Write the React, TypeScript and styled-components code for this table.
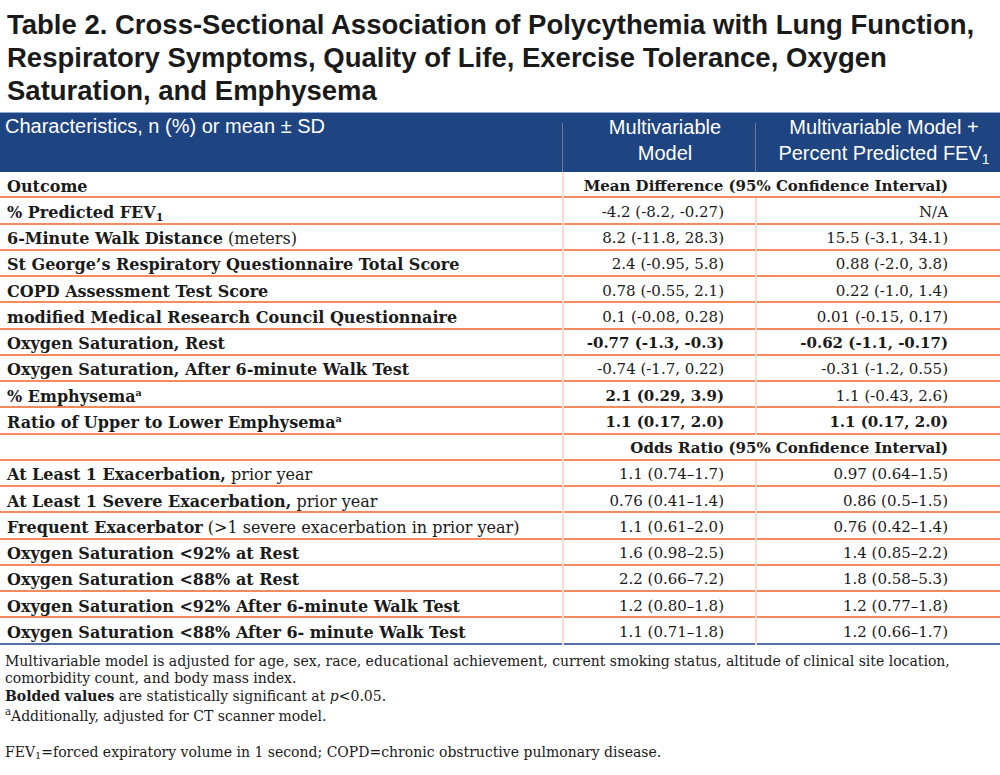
import React from "react";
import styled, { createGlobalStyle } from "styled-components";

const GlobalStyle = createGlobalStyle`
  html, body { margin: 0; padding: 0; background: #ffffff; }
  body { font-family: "DejaVu Serif", serif; color: #1a1a1a; }
`;

const Page = styled.div`
  width: 1000px;
  display: flex;
  flex-direction: column;
`;

const Title = styled.h1`
  margin: 0;
  padding: 8px 0 0 7px;
  font-family: "Liberation Sans", Arial, sans-serif;
  font-weight: bold;
  font-size: 27.5px;
  line-height: 33px;
  color: #1a1a1a;
  height: 112px;
  box-sizing: border-box;
`;

const HeaderBar = styled.div`
  display: grid;
  grid-template-columns: 562px 193px 1fr;
  background: #1e4582;
  border-top: 1px solid #8fa8d0;
  height: 60px;
  box-sizing: border-box;
  color: #ffffff;
  font-family: "Liberation Sans", Arial, sans-serif;
  font-size: 20px;
  line-height: 26px;
`;

const HeadCell = styled.div<{ $center?: boolean; $divider?: boolean }>`
  position: relative;
  padding: ${(p) => (p.$center ? "1px 0 0 13px" : "0 0 0 5px")};
  text-align: ${(p) => (p.$center ? "center" : "left")};
  &::before {
    content: "";
    display: ${(p) => (p.$divider ? "block" : "none")};
    position: absolute;
    left: 0;
    top: 10px;
    bottom: 0;
    width: 1px;
    background: #6f7a9a;
  }
`;

const Body = styled.div`
  display: flex;
  flex-direction: column;
`;

const Row = styled.div<{ $last?: boolean }>`
  display: grid;
  grid-template-columns: 562px 193px 1fr;
  height: 26.25px;
  box-sizing: border-box;
  border-bottom: 2px solid ${(p) => (p.$last ? "#5470a8" : "#f58a5c")};
  font-size: 15px;
  line-height: 25px;
`;

const Label = styled.div`
  padding: 1.5px 0 0 7px;
  white-space: nowrap;
  font-size: 16px;
  line-height: 25px;
`;

const Strong = styled.span`
  font-weight: bold;
`;

const Value = styled.div<{ $bold?: boolean; $pad: number }>`
  border-left: 2px solid #fcdccf;
  text-align: right;
  padding-top: 1.5px;
  padding-right: ${(p) => p.$pad}px;
  font-weight: ${(p) => (p.$bold ? "bold" : "normal")};
  white-space: nowrap;
`;

const SpanValue = styled(Value)`
  grid-column: 2 / 4;
  font-weight: bold;
`;

const Sub = styled.sub`
  font-size: 0.7em;
  vertical-align: -0.25em;
  line-height: 0;
`;

const Sup = styled.sup`
  font-size: 0.6em;
  vertical-align: 0.6em;
  line-height: 0;
`;

const NoteSup = styled(Sup)`
  font-size: 0.72em;
`;

const Notes = styled.div`
  padding: 8px 0 0 5px;
  font-size: 14px;
  line-height: 17.5px;
  color: #1a1a1a;
`;

const NoteLine = styled.p<{ $gap?: number }>`
  margin: ${(p) => p.$gap ?? 0}px 0 0 0;
`;

type DataRow = {
  label: React.ReactNode;
  a: string;
  b: string;
  boldA?: boolean;
  boldB?: boolean;
};

const meanRows: DataRow[] = [
  { label: <Strong>% Predicted FEV<Sub>1</Sub></Strong>, a: "-4.2 (-8.2, -0.27)", b: "N/A" },
  { label: <><Strong>6-Minute Walk Distance</Strong> (meters)</>, a: "8.2 (-11.8, 28.3)", b: "15.5 (-3.1, 34.1)" },
  { label: <Strong>St George’s Respiratory Questionnaire Total Score</Strong>, a: "2.4 (-0.95, 5.8)", b: "0.88 (-2.0, 3.8)" },
  { label: <Strong>COPD Assessment Test Score</Strong>, a: "0.78 (-0.55, 2.1)", b: "0.22 (-1.0, 1.4)" },
  { label: <Strong>modified Medical Research Council Questionnaire</Strong>, a: "0.1 (-0.08, 0.28)", b: "0.01 (-0.15, 0.17)" },
  { label: <Strong>Oxygen Saturation, Rest</Strong>, a: "-0.77 (-1.3, -0.3)", b: "-0.62 (-1.1, -0.17)", boldA: true, boldB: true },
  { label: <Strong>Oxygen Saturation, After 6-minute Walk Test</Strong>, a: "-0.74 (-1.7, 0.22)", b: "-0.31 (-1.2, 0.55)" },
  { label: <Strong>% Emphysema<Sup>a</Sup></Strong>, a: "2.1 (0.29, 3.9)", b: "1.1 (-0.43, 2.6)", boldA: true },
  { label: <Strong>Ratio of Upper to Lower Emphysema<Sup>a</Sup></Strong>, a: "1.1 (0.17, 2.0)", b: "1.1 (0.17, 2.0)", boldA: true, boldB: true },
];

const oddsRows: DataRow[] = [
  { label: <><Strong>At Least 1 Exacerbation,</Strong> prior year</>, a: "1.1 (0.74–1.7)", b: "0.97 (0.64–1.5)" },
  { label: <><Strong>At Least 1 Severe Exacerbation,</Strong> prior year</>, a: "0.76 (0.41–1.4)", b: "0.86 (0.5–1.5)" },
  { label: <><Strong>Frequent Exacerbator</Strong> (&gt;1 severe exacerbation in prior year)</>, a: "1.1 (0.61–2.0)", b: "0.76 (0.42–1.4)" },
  { label: <Strong>Oxygen Saturation &lt;92% at Rest</Strong>, a: "1.6 (0.98–2.5)", b: "1.4 (0.85–2.2)" },
  { label: <Strong>Oxygen Saturation &lt;88% at Rest</Strong>, a: "2.2 (0.66–7.2)", b: "1.8 (0.58–5.3)" },
  { label: <Strong>Oxygen Saturation &lt;92% After 6-minute Walk Test</Strong>, a: "1.2 (0.80–1.8)", b: "1.2 (0.77–1.8)" },
  { label: <Strong>Oxygen Saturation &lt;88% After 6- minute Walk Test</Strong>, a: "1.1 (0.71–1.8)", b: "1.2 (0.66–1.7)" },
];

const DataLine: React.FC<{ row: DataRow; last?: boolean }> = ({ row, last }) => (
  <Row $last={last}>
    <Label>{row.label}</Label>
    <Value $pad={31} $bold={row.boldA}>{row.a}</Value>
    <Value $pad={52} $bold={row.boldB}>{row.b}</Value>
  </Row>
);

export default function App() {
  return (
    <>
      <GlobalStyle />
      <Page>
        <Title>
          Table 2. Cross-Sectional Association of Polycythemia with Lung Function,
          <br />
          Respiratory Symptoms, Quality of Life, Exercise Tolerance, Oxygen
          <br />
          Saturation, and Emphysema
        </Title>
        <HeaderBar>
          <HeadCell>Characteristics, n (%) or mean ± SD</HeadCell>
          <HeadCell $center $divider>
            Multivariable<br />Model
          </HeadCell>
          <HeadCell $center $divider>
            Multivariable Model +<br />Percent Predicted FEV<Sub>1</Sub>
          </HeadCell>
        </HeaderBar>
        <Body>
          <Row>
            <Label><Strong>Outcome</Strong></Label>
            <SpanValue $pad={52}>Mean Difference (95% Confidence Interval)</SpanValue>
          </Row>
          {meanRows.map((r, i) => (
            <DataLine key={`m${i}`} row={r} />
          ))}
          <Row>
            <Label />
            <SpanValue $pad={52}>Odds Ratio (95% Confidence Interval)</SpanValue>
          </Row>
          {oddsRows.map((r, i) => (
            <DataLine key={`o${i}`} row={r} last={i === oddsRows.length - 1} />
          ))}
        </Body>
        <Notes>
          <NoteLine>
            Multivariable model is adjusted for age, sex, race, educational achievement, current smoking status, altitude of clinical site location,
            <br />
            comorbidity count, and body mass index.
          </NoteLine>
          <NoteLine>
            <Strong>Bolded values</Strong> are statistically significant at <i>p</i>&lt;0.05.
          </NoteLine>
          <NoteLine $gap={3}>
            <NoteSup>a</NoteSup>Additionally, adjusted for CT scanner model.
          </NoteLine>
          <NoteLine $gap={18}>
            FEV<Sub>1</Sub>=forced expiratory volume in 1 second; COPD=chronic obstructive pulmonary disease.
          </NoteLine>
        </Notes>
      </Page>
    </>
  );
}
